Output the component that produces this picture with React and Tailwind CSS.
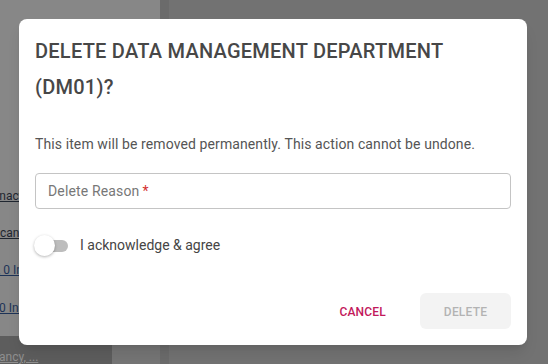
import React from "react";

const font = { fontFamily: "Roboto, 'Liberation Sans', sans-serif" };

function PageBehind() {
  return (
    <div className="flex h-full w-full">
      {/* left table column */}
      <div className="flex h-full w-[160px] flex-col bg-[#878787]">
        <div className="flex flex-1 flex-col overflow-hidden pt-[187px] text-[12px] text-[#1f2630]">
          <div className="h-[41px] whitespace-nowrap">
            <span className="-ml-[4px] underline">Inactive</span>
          </div>
          <div className="h-[40px] whitespace-nowrap">
            <span className="-ml-[14px] underline">Vacancy</span>
          </div>
          <div className="h-[42px] whitespace-nowrap">
            <span className="-ml-[2px] underline text-[#1d3357]">, 0 Inactive</span>
          </div>
          <div className="h-[40px] whitespace-nowrap">
            <span className="-ml-[1px] underline text-[#1d3357]">0 Inactive</span>
          </div>
        </div>
        <div className="flex h-[28px]">
          <div className="w-[112px] overflow-hidden whitespace-nowrap bg-[#5d5d5d] pt-[12px] text-[12px] text-[#8f8f8f]">
            <span className="-ml-[1px] underline">ancy, ...</span>
          </div>
          <div className="flex-1 bg-[#757575]" />
        </div>
      </div>
      <div className="h-full w-[9px] bg-[#6b6b6b]" />
      <div className="h-full flex-1 bg-[#727272]" />
    </div>
  );
}

export default function App() {
  return (
    <div className="relative h-[364px] w-[548px] overflow-hidden" style={font}>
      <PageBehind />

      {/* Dialog */}
      <div className="absolute left-[19px] top-[19px] flex h-[326px] w-[508px] flex-col rounded-lg bg-white px-4 pb-4 shadow-lg">
        <h2 className="pt-[14px] text-[20px] font-medium leading-[36px] tracking-[0.25px] text-[#474747]">
          DELETE DATA MANAGEMENT DEPARTMENT (DM01)?
        </h2>

        <p className="mt-[29px] text-[14px] leading-[20px] tracking-[0.1px] text-[#555555]">
          This item will be removed permanently. This action cannot be undone.
        </p>

        <div className="mt-[19px] flex h-[36px] items-center rounded border border-[#c4c4c4] px-3 text-[14px] tracking-[0.15px] text-[#777777]">
          Delete Reason
          <span className="ml-[3px] text-[#d32f2f]">*</span>
        </div>

        <div className="mt-[26px] flex items-center">
          <div className="relative h-[21px] w-[34px]">
            <div className="absolute left-[4px] top-[5px] h-[12px] w-[29px] rounded-full bg-[#bdbdbd]" />
            <div className="absolute -left-px top-0 h-[21px] w-[21px] rounded-full bg-white shadow-[0_1px_3px_rgba(0,0,0,0.3)]" />
          </div>
          <span className="ml-[11px] text-[14px] text-[#454545]">I acknowledge &amp; agree</span>
        </div>

        <div className="mt-auto flex items-center justify-end gap-[18px]">
          <button className="h-[36px] px-4 pt-[2px] text-[12px] font-medium tracking-[0.2px] text-[#c2185b]">
            CANCEL
          </button>
          <button className="h-[36px] w-[91px] rounded-md bg-[#f3f3f3] pt-[2px] text-[12px] font-medium tracking-[0.2px] text-[#b3b3b3]">
            DELETE
          </button>
        </div>
      </div>
    </div>
  );
}
